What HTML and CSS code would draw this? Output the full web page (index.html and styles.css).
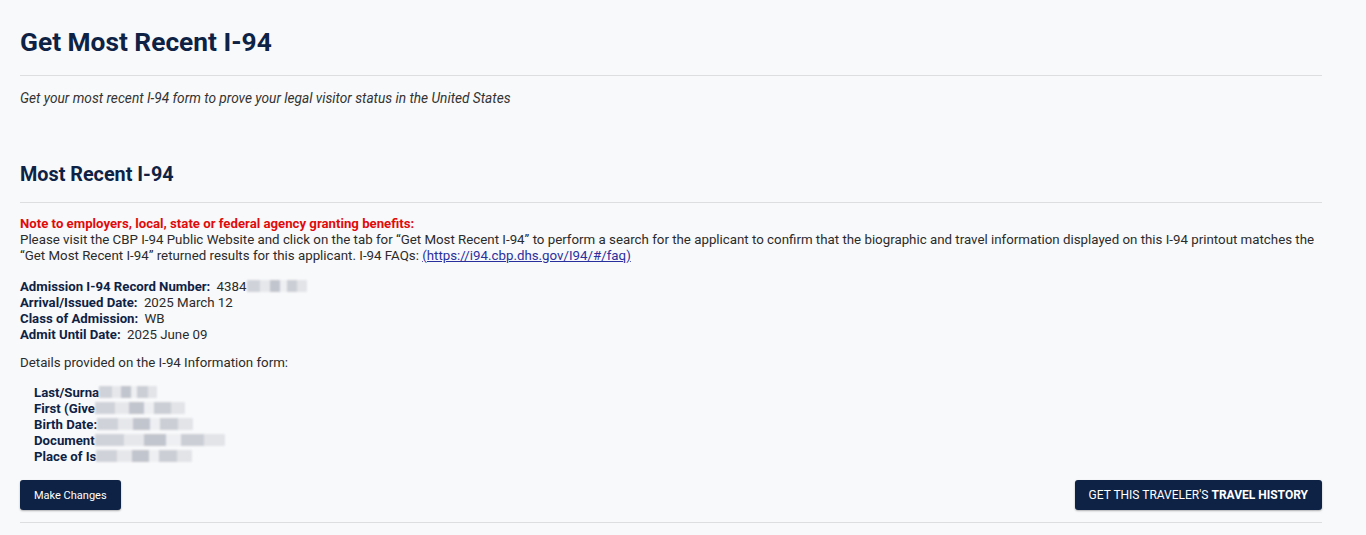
FILE: index.html
```html
<!DOCTYPE html>
<html lang="en">

<head>
    <meta charset="UTF-8">
    <title>Get Most Recent I-94</title>
    <link rel="stylesheet" href="styles.css">
</head>

<body>
    <div class="wrapper">
        <header>
            <h1>Get Most Recent I-94</h1>
            <p class="intro">Get your most recent I-94 form to prove your legal visitor status in the United States</p>
        </header>

        <section class="recent">
            <h2>Most Recent I-94</h2>

            <div class="note">
                <p class="warn">Note to employers, local, state or federal agency granting benefits:</p>
                <p>Please visit the CBP I-94 Public Website and click on the tab for “Get Most Recent I-94” to perform a search for the applicant to confirm that the biographic and travel information displayed on this I-94 printout matches the “Get Most Recent I-94” returned results for this applicant. I-94 FAQs: <a href="#">(https://i94.cbp.dhs.gov/I94/#/faq)</a></p>
            </div>

            <div class="record">
                <p><b>Admission I-94 Record Number:</b> 4384<span class="blur w60"></span></p>
                <p><b>Arrival/Issued Date:</b> 2025 March 12</p>
                <p><b>Class of Admission:</b> WB</p>
                <p><b>Admit Until Date:</b> 2025 June 09</p>
            </div>

            <p class="details">Details provided on the I-94 Information form:</p>

            <div class="person">
                <p><b>Last/Surna</b><span class="blur w58"></span></p>
                <p><b>First (Give</b><span class="blur w90"></span></p>
                <p><b>Birth Date:</b><span class="blur w96"></span></p>
                <p><b>Document</b><span class="blur w130"></span></p>
                <p><b>Place of Is</b><span class="blur w96"></span></p>
            </div>

            <div class="actions">
                <button class="btn">Make Changes</button>
                <button class="btn big">GET THIS TRAVELER'S <b>TRAVEL HISTORY</b></button>
            </div>
        </section>
    </div>
</body>

</html>
```

FILE: styles.css
```css
* {
    margin: 0;
    box-sizing: border-box;
}

body {
    background-color: #f8f9fa;
    font-family: Roboto, "Liberation Sans", sans-serif;
    font-size: 13.3px;
    line-height: 16px;
    color: #2b2b2b;
}

.wrapper {
    width: 1302px;
    margin-left: 20px;
}

h1 {
    color: #0e2245;
    font-size: 26.3px;
    line-height: 32px;
    font-weight: bold;
    padding-top: 26px;
    padding-bottom: 17px;
    border-bottom: 1px solid #dcdee0;
}

.intro {
    font-style: italic;
    font-size: 13.7px;
    color: #333;
    margin-top: 14px;
}

h2 {
    color: #0e2245;
    font-size: 19.8px;
    line-height: 24px;
    font-weight: bold;
    margin-top: 57px;
    padding-bottom: 15px;
    border-bottom: 1px solid #dcdee0;
}

.note {
    margin-top: 13px;
}

.warn {
    color: #e00b0b;
    font-weight: bold;
    font-size: 13.2px;
}

.note a {
    color: #2a2f9e;
}

.record {
    margin-top: 15px;
}

.record b,
.person b {
    color: #0e2245;
    font-size: 13.2px;
    margin-right: 3px;
}

.person b {
    margin-right: 0;
}

.details {
    margin-top: 12px;
}

.person {
    margin-top: 14px;
    padding-left: 14px;
}

.blur {
    display: inline-block;
    height: 12px;
    vertical-align: -1px;
    background: linear-gradient(90deg, #c9ccd3 0 22%, #e4e5e9 22% 38%, #b8bcc6 38% 55%, #eceef1 55% 66%, #c4c7cf 66% 84%, #dfe1e5 84%);
    filter: blur(1px);
    opacity: 0.85;
}

.w60 { width: 60px; }
.w58 { width: 58px; }
.w90 { width: 90px; }
.w96 { width: 96px; }
.w130 { width: 130px; }

.actions {
    display: flex;
    justify-content: space-between;
    margin-top: 15px;
    padding-bottom: 12px;
    border-bottom: 1px solid #dcdee0;
}

.btn {
    background-color: #0e2245;
    color: #fff;
    border: none;
    border-radius: 3px;
    font-family: Roboto, "Liberation Sans", sans-serif;
    font-size: 11px;
    padding: 0 14px;
    height: 30px;
    box-shadow: 0 1px 2px rgba(0, 0, 0, .3);
}

.big {
    font-size: 12px;
}

.btn b {
    font-weight: bold;
}
```
